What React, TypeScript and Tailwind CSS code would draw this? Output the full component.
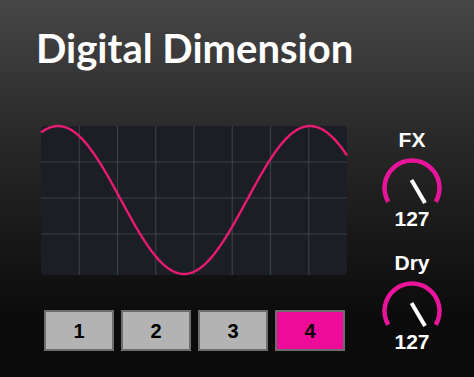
import React from "react";

const W = 306;
const H = 149;

// peak at x=17, period 252, amplitude 74
const wavePath = (() => {
	const pts: string[] = [];
	for (let x = 0; x <= W; x += 2) {
		const y = 74 - 74 * Math.cos((2 * Math.PI * (x - 17)) / 252);
		pts.push(`${x === 0 ? "M" : "L"}${x.toFixed(1)} ${y.toFixed(2)}`);
	}
	return pts.join(" ");
})();

const Scope = () => (
	<div className="relative w-[306px] h-[149px] rounded-[4px] bg-[#1b1e25]">
		<svg
			width={W}
			height={H}
			viewBox={`0 0 ${W} ${H}`}
			className="absolute inset-0 overflow-visible"
		>
			{[1, 2, 3, 4, 5, 6, 7].map((i) => (
				<line
					key={`v${i}`}
					x1={i * 38.25}
					x2={i * 38.25}
					y1={0}
					y2={H}
					stroke="#3a3e46"
					strokeWidth={1.2}
				/>
			))}
			{[1, 2, 3].map((i) => (
				<line
					key={`h${i}`}
					x1={0}
					x2={W}
					y1={36 + (i - 1) * 36}
					y2={36 + (i - 1) * 36}
					stroke="#3a3e46"
					strokeWidth={1.2}
				/>
			))}
			<path
				d={wavePath}
				fill="none"
				stroke="#e81a72"
				strokeWidth={2.4}
				strokeLinejoin="round"
			/>
		</svg>
	</div>
);

const Knob = ({ label, value }: { label: string; value: number }) => (
	<div className="flex flex-col items-center">
		<span className="text-[21px] leading-none font-bold text-white">{label}</span>
		<svg width={64} height={64} viewBox="0 0 64 64" className="mt-[6px]">
			<path
				d="M8.2 45.75 A27.5 27.5 0 1 1 55.8 45.75"
				fill="none"
				stroke="#e8159a"
				strokeWidth={4.5}
			/>
			<line x1={31.5} y1={24} x2={45} y2={47} stroke="#ffffff" strokeWidth={4} />
		</svg>
		<span className="-mt-[12px] text-[21px] leading-none font-bold text-white">
			{value}
		</span>
	</div>
);

const buttons = [1, 2, 3, 4];

export default function App() {
	const active = 4;
	return (
		<div className="w-[474px] h-[377px] overflow-hidden bg-linear-to-b from-[#474747] via-[#2a2a2a] via-35% to-[#0b0b0b] to-85% font-['Liberation_Sans',Arial,sans-serif]">
			<h1 className="pt-[28px] pl-[36px] text-[40px] leading-none font-bold text-white font-['Lato','Open_Sans',sans-serif]">
				Digital Dimension
			</h1>

			<div className="flex items-start mt-[58px]">
				<div className="ml-[41px] flex flex-col">
					<Scope />
					<div className="mt-[35px] ml-[3px] flex gap-[7px]">
						{buttons.map((n) => (
							<div
								key={n}
								className={`w-[70px] h-[41px] flex items-center justify-center border-2 border-[#6d6d6d] text-[20px] font-bold text-black ${
									n === active ? "bg-[#ec0c99]" : "bg-[#b3b3b3]"
								}`}
							>
								{n}
							</div>
						))}
					</div>
				</div>

				<div className="ml-[30px] w-[70px] pt-[3px] flex flex-col items-center gap-[23px]">
					<Knob label="FX" value={127} />
					<Knob label="Dry" value={127} />
				</div>
			</div>
		</div>
	);
}
